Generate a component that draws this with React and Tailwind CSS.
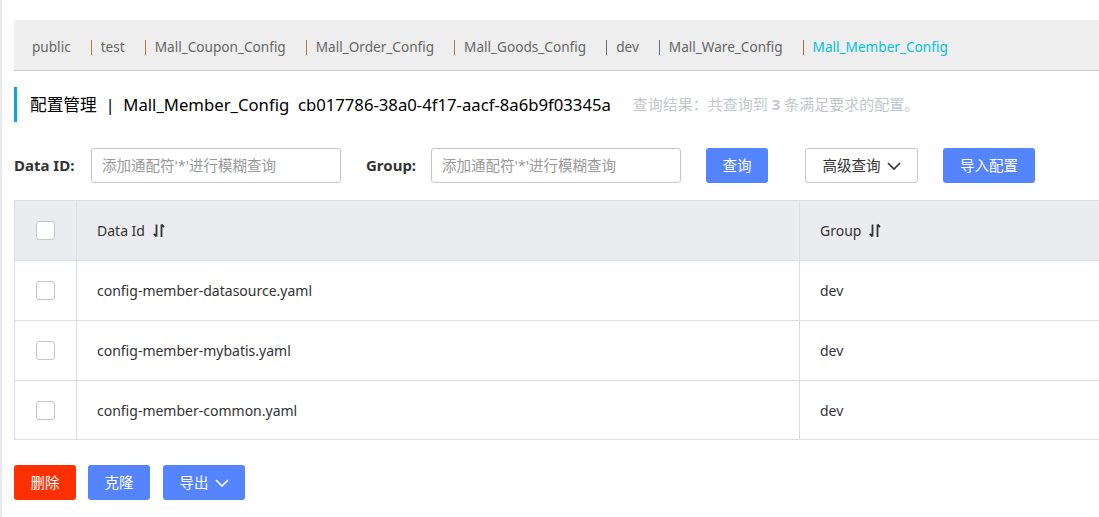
import React from "react";

const font = { fontFamily: '"Noto Sans", "Noto Sans CJK SC", sans-serif' };

function SortIcon() {
  return (
    <svg width="12" height="17" viewBox="0 0 12 17" className="ml-2 inline-block">
      <path d="M3.5 2.5 V14.5 M0.8 11.8 L3.5 14.5" stroke="#333" strokeWidth="1.8" fill="none" />
      <path d="M8.5 15 V2.5 M8.5 2.5 L11 5" stroke="#333" strokeWidth="1.8" fill="none" />
    </svg>
  );
}

function Chevron({ color = "#333" }) {
  return (
    <svg width="14" height="10" viewBox="0 0 14 10" className="ml-1.5 inline-block">
      <path d="M1 2 L7 8 L13 2" stroke={color} strokeWidth="1.6" fill="none" />
    </svg>
  );
}

function Checkbox() {
  return <div className="w-[19px] h-[19px] rounded-[3px] border border-[#c4c6cf] bg-white" />;
}

const tabs = [
  { name: "public" },
  { name: "test", bar: "#b8793c" },
  { name: "Mall_Coupon_Config", bar: "#b8793c" },
  { name: "Mall_Order_Config", bar: "#b8793c" },
  { name: "Mall_Goods_Config", bar: "#b8793c" },
  { name: "dev", bar: "#7a6a60" },
  { name: "Mall_Ware_Config", bar: "#5b7392" },
  { name: "Mall_Member_Config", bar: "#a0703f", active: true },
];

const rows = [
  "config-member-datasource.yaml",
  "config-member-mybatis.yaml",
  "config-member-common.yaml",
];

export default function App() {
  return (
    <div className="w-[1099px] h-[517px] overflow-hidden bg-white flex" style={font}>
      <div className="w-[2px] bg-[#e6e9ee] shrink-0" />
      <div className="flex-1 pl-3 pt-5 min-w-0">
        {/* tabs */}
        <div className="h-[51px] bg-[#eeeeee] border-b border-[#cccccc] flex items-center pl-[18px] pt-[5px] text-[13.6px] text-[#666] whitespace-nowrap -mr-4">
          {tabs.map((t, i) => (
            <span key={i} className="flex items-center">
              {t.bar && <span className="w-px h-[15px] mr-[9px]" style={{ background: t.bar }} />}
              <span className={t.active ? "text-[#00c1de]" : ""}>{t.name}</span>
              {i < tabs.length - 1 && <span className="w-[20px]" />}
            </span>
          ))}
        </div>

        {/* title */}
        <div className="mt-[16px] flex items-center h-[35px] border-l-[3px] border-[#0aa5d9] pl-[13px] whitespace-nowrap">
          <span className="text-[16.7px] text-black">配置管理&nbsp;&nbsp;|&nbsp;&nbsp;Mall_Member_Config&nbsp;&nbsp;cb017786-38a0-4f17-aacf-8a6b9f03345a</span>
          <span className="ml-[22px] text-[15px] text-[#c4c6cf]">
            查询结果：共查询到 <b className="font-bold">3</b> 条满足要求的配置。
          </span>
        </div>

        {/* search */}
        <div className="mt-[26px] flex items-center h-[35px] whitespace-nowrap">
          <span className="text-[15px] font-bold text-[#333] w-[77px]">Data ID:</span>
          <div className="w-[250px] h-[35px] border border-[#c4c6cf] rounded-[3px] flex items-center pl-[10px] text-[14.5px] text-[#999]">
            添加通配符'*'进行模糊查询
          </div>
          <span className="ml-[25px] text-[15px] font-bold text-[#333] w-[65px]">Group:</span>
          <div className="w-[250px] h-[35px] border border-[#c4c6cf] rounded-[3px] flex items-center pl-[10px] text-[14.5px] text-[#999]">
            添加通配符'*'进行模糊查询
          </div>
          <div className="ml-[25px] w-[62px] h-[35px] rounded-[3px] bg-[#5584ff] text-white text-[14.5px] flex items-center justify-center">查询</div>
          <div className="ml-[37px] w-[113px] h-[35px] rounded-[3px] border border-[#c4c6cf] bg-white text-[#333] text-[14.5px] flex items-center justify-center">
            高级查询<Chevron />
          </div>
          <div className="ml-[25px] w-[92px] h-[35px] rounded-[3px] bg-[#5584ff] text-white text-[14.5px] flex items-center justify-center">导入配置</div>
        </div>

        {/* table */}
        <div className="mt-[17px] -mr-4 border-l border-t border-[#dcdee3] text-[14px] text-[#333]">
          <div className="flex h-[60px] bg-[#ebecf0] border-b border-[#dcdee3]">
            <div className="w-[62px] border-r border-[#dcdee3] flex items-center justify-center"><Checkbox /></div>
            <div className="w-[723px] border-r border-[#dcdee3] flex items-center pl-[20px]">Data Id<SortIcon /></div>
            <div className="flex-1 flex items-center pl-[20px]">Group<SortIcon /></div>
          </div>
          {rows.map((r, i) => (
            <div key={r} className={`flex border-b border-[#dcdee3] ${i === rows.length - 1 ? "h-[59px]" : "h-[60px]"}`}>
              <div className="w-[62px] border-r border-[#dcdee3] flex items-center justify-center"><Checkbox /></div>
              <div className="w-[723px] border-r border-[#dcdee3] flex items-center pl-[20px]">{r}</div>
              <div className="flex-1 flex items-center pl-[20px]">dev</div>
            </div>
          ))}
        </div>

        {/* bottom buttons */}
        <div className="mt-[25px] flex items-center gap-[12px] text-[14.5px] text-white">
          <div className="w-[62px] h-[35px] rounded-[3px] bg-[#ff3000] flex items-center justify-center">删除</div>
          <div className="w-[62px] h-[35px] rounded-[3px] bg-[#5584ff] flex items-center justify-center">克隆</div>
          <div className="w-[82px] h-[35px] rounded-[3px] bg-[#5584ff] flex items-center justify-center ml-[1px]">导出<Chevron color="#fff" /></div>
        </div>
      </div>
    </div>
  );
}
